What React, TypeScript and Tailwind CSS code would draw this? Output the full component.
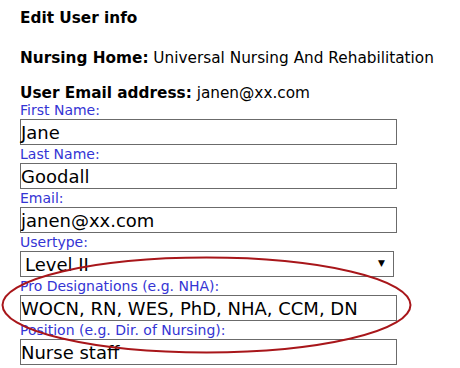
const FIELDS: { label: string; value: string; select?: boolean }[] = [
  { label: 'First Name:', value: 'Jane' },
  { label: 'Last Name:', value: 'Goodall' },
  { label: 'Email:', value: 'janen@xx.com' },
  { label: 'Usertype:', value: 'Level II', select: true },
  { label: 'Pro Designations (e.g. NHA):', value: 'WOCN, RN, WES, PhD, NHA, CCM, DN' },
  { label: 'Position (e.g. Dir. of Nursing):', value: 'Nurse staff' },
];

export default function App() {
  return (
    <div className="relative h-[368px] w-[460px] overflow-hidden bg-white pl-[20px] pt-[8px] font-['DejaVu_Sans',sans-serif] text-black">
      <div className="h-[20px] text-[15.3px] font-bold leading-[20px]">Edit User info</div>

      <div className="mt-[20px] h-[20px] text-[15.3px] leading-[20px]">
        <span className="font-bold">Nursing Home:</span> Universal Nursing And Rehabilitation
      </div>

      <div className="mt-[15px] h-[18px] text-[15.3px] leading-[20px]">
        <span className="font-bold">User Email address:</span> janen@xx.com
      </div>

      <div className="flex flex-col">
        {FIELDS.map((f) => (
          <div key={f.label} className="flex flex-col">
            <label className="h-[18px] text-[14px] leading-[18px] text-[#3434d4]">{f.label}</label>
            {f.select ? (
              <div className="flex h-[26px] w-[374px] items-center justify-between border border-[#6b6b6b] pl-[4px] pr-[8px] text-[18px]">
                <span>{f.value}</span>
                <span className="text-[9px]">▼</span>
              </div>
            ) : (
              <div className="flex h-[26px] w-[377px] items-center border border-[#6b6b6b] pl-[0px] text-[18px]">
                {f.value}
              </div>
            )}
          </div>
        ))}
      </div>

      {/* annotation ring */}
      <svg className="pointer-events-none absolute left-0 top-0" width="460" height="368">
        <ellipse cx="206.5" cy="305" rx="204" ry="47.5" fill="none" stroke="#a8161a" strokeWidth="2" />
      </svg>
    </div>
  );
}
